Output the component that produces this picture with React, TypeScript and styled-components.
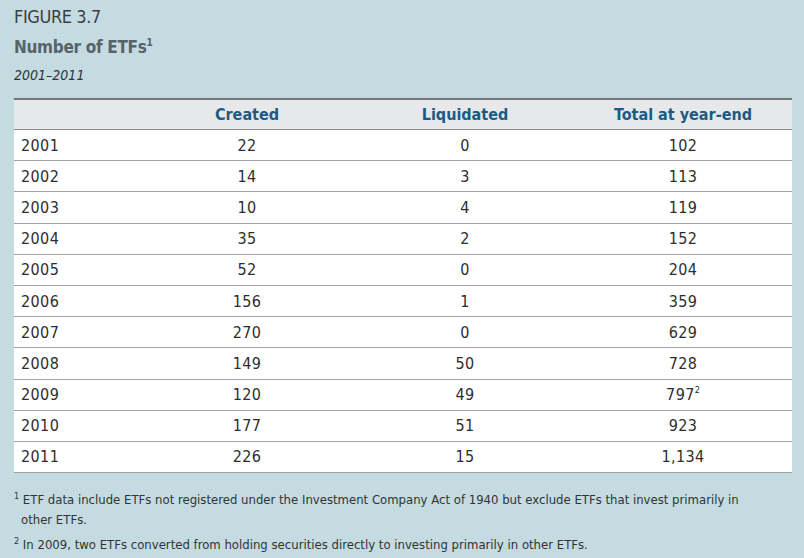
import React from "react";
import styled, { createGlobalStyle } from "styled-components";

const Global = createGlobalStyle`
  html, body { margin: 0; padding: 0; }
  body {
    background: #c4dbe2;
    font-family: "DejaVu Sans Condensed", "Liberation Sans", sans-serif;
    color: #333;
  }
`;

const Page = styled.div`
  width: 804px;
  height: 558px;
  box-sizing: border-box;
  padding: 5px 12px 0 14px;
  display: flex;
  flex-direction: column;
`;

const Label = styled.div`
  font-size: 18px;
  line-height: 24px;
  letter-spacing: -0.4px;
  color: #3b3f42;
  font-weight: 400;
`;

const Title = styled.div`
  font-size: 17px;
  line-height: 24px;
  letter-spacing: -0.3px;
  font-weight: 700;
  color: #56636b;
  margin-top: 6px;
  sup { font-size: 10px; vertical-align: 7px; line-height: 0; }
`;

const Sub = styled.div`
  font-size: 14px;
  line-height: 20px;
  font-style: italic;
  color: #333;
  margin-top: 6px;
`;

const Table = styled.table`
  margin-top: 13px;
  width: 778px;
  border-collapse: collapse;
  table-layout: fixed;
  background: #fff;
`;

const HeadRow = styled.tr`
  background: #e7e8e9;
  border-top: 2px solid #74787b;
  border-bottom: 1px solid #8e9194;
`;

const Th = styled.th<{ $w: number }>`
  width: ${(p) => p.$w}px;
  height: 29px;
  padding: 0;
  font-size: 16px;
  font-weight: 700;
  color: #1d5a86;
  text-align: center;
`;

const Row = styled.tr`
  border-bottom: 1px solid #9fa3a6;
`;

const Td = styled.td<{ $left?: boolean }>`
  height: 30.2px;
  padding: 0 0 0 ${(p) => (p.$left ? "7px" : "0")};
  font-size: 16px;
  color: #2e2e2e;
  text-align: ${(p) => (p.$left ? "left" : "center")};
  letter-spacing: 0.4px;
  sup { font-size: 9px; vertical-align: 7px; line-height: 0; letter-spacing: 0; }
`;

const Notes = styled.div`
  margin-top: 17px;
  max-width: 735px;
  display: flex;
  flex-direction: column;
  gap: 5px;
  font-size: 13px;
  line-height: 20px;
  color: #333;
`;

const Note = styled.div`
  padding-left: 7px;
  text-indent: -7px;
  sup { font-size: 9px; vertical-align: 5px; line-height: 0; }
`;

const rows: [string, string, string, React.ReactNode][] = [
  ["2001", "22", "0", "102"],
  ["2002", "14", "3", "113"],
  ["2003", "10", "4", "119"],
  ["2004", "35", "2", "152"],
  ["2005", "52", "0", "204"],
  ["2006", "156", "1", "359"],
  ["2007", "270", "0", "629"],
  ["2008", "149", "50", "728"],
  ["2009", "120", "49", <>797<sup>2</sup></>],
  ["2010", "177", "51", "923"],
  ["2011", "226", "15", "1,134"],
];

export default function App() {
  return (
    <>
      <Global />
      <Page>
        <Label>FIGURE 3.7</Label>
        <Title>
          Number of ETFs<sup>1</sup>
        </Title>
        <Sub>2001–2011</Sub>
        <Table>
          <thead>
            <HeadRow>
              <Th $w={124}></Th>
              <Th $w={218}>Created</Th>
              <Th $w={218}>Liquidated</Th>
              <Th $w={218}>Total at year-end</Th>
            </HeadRow>
          </thead>
          <tbody>
            {rows.map((r) => (
              <Row key={r[0]}>
                <Td $left>{r[0]}</Td>
                <Td>{r[1]}</Td>
                <Td>{r[2]}</Td>
                <Td>{r[3]}</Td>
              </Row>
            ))}
          </tbody>
        </Table>
        <Notes>
          <Note>
            <sup>1</sup> ETF data include ETFs not registered under the Investment Company Act of 1940 but exclude ETFs that invest primarily in
            other ETFs.
          </Note>
          <Note>
            <sup>2</sup> In 2009, two ETFs converted from holding securities directly to investing primarily in other ETFs.
          </Note>
        </Notes>
      </Page>
    </>
  );
}
